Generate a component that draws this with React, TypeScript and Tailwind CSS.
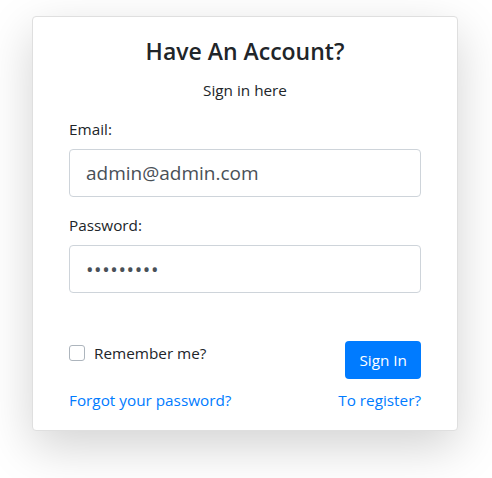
export default function App() {
  return (
    <div
      className="min-h-screen bg-white text-[#212529]"
      style={{ fontFamily: '"Open Sans", "Noto Sans", sans-serif' }}
    >
      <div className="pt-4 pl-8 w-[458px]">
        {/* Login card */}
        <div className="w-[426px] rounded-[4px] border border-[#dfdfdf] bg-white px-9 pt-5 pb-[18px] text-[15.3px] shadow-[0_16px_48px_rgba(0,0,0,0.175)]">
          <h3 className="text-center text-[23px] font-semibold leading-[29px]">Have An Account?</h3>
          <p className="mt-3 text-center leading-6">Sign in here</p>

          <label className="mt-[15px] mb-2 block leading-6">Email:</label>
          <input
            type="email"
            readOnly
            value="admin@admin.com"
            className="block h-12 w-full rounded-[4px] border border-[#ced4da] px-4 text-[19px] text-[#495057] outline-none"
          />

          <label className="mt-4 mb-2 block leading-6">Password:</label>
          <input
            type="password"
            readOnly
            value="123456789"
            className="block h-12 w-full rounded-[4px] border border-[#ced4da] px-4 text-[20px] tracking-[0.6px] text-[#495057] outline-none"
          />

          <div className="mt-12 flex items-start justify-between">
            <label className="flex items-center gap-[9px] leading-6">
              <span className="block size-4 rounded-[3px] border border-[#adb5bd] bg-white" />
              Remember me?
            </label>
            <button className="h-[38px] rounded-[4px] bg-[#007bff] px-[14px] text-white">Sign In</button>
          </div>

          <div className="mt-[9px] flex justify-between leading-6 text-[#007bff]">
            <a href="#">Forgot your password?</a>
            <a href="#">To register?</a>
          </div>
        </div>
      </div>
    </div>
  );
}
